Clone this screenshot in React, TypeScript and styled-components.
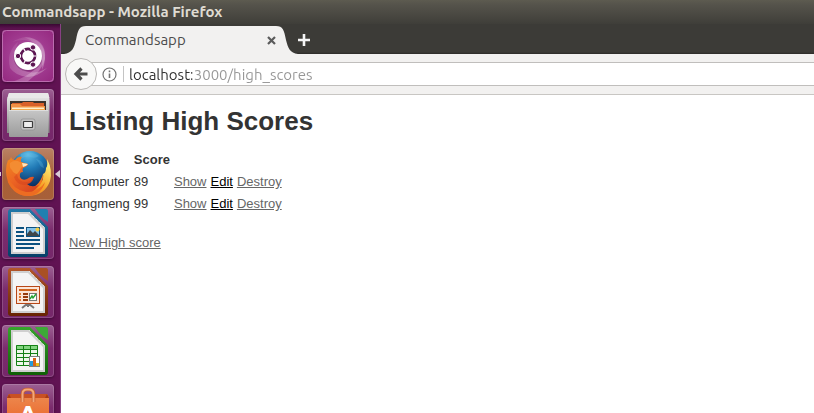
import React from "react";
import styled, { createGlobalStyle } from "styled-components";

const GlobalStyle = createGlobalStyle`
  * { box-sizing: border-box; }
  body { margin: 0; background: #fff; }
`;

const uiFont = `Ubuntu, "Noto Sans", sans-serif`;

const Desktop = styled.div`
  display: flex;
  flex-direction: column;
  height: 100vh;
  overflow: hidden;
  font-family: ${uiFont};
`;

const TitleBar = styled.header`
  flex: none;
  height: 24px;
  padding: 0 2px;
  background: linear-gradient(#5d5b50, #55534b 20%, #3f3e39);
  color: #dfdbd2;
  font-size: 15px;
  font-weight: 700;
  line-height: 24px;
  white-space: nowrap;
`;

const Workspace = styled.div`
  display: flex;
  flex: 1;
  min-height: 0;
`;

const Launcher = styled.nav`
  flex: none;
  display: flex;
  flex-direction: column;
  gap: 7px;
  width: 61px;
  padding: 6px 0 0 2px;
  overflow: hidden;
  border-right: 1px solid #874083;
  background: linear-gradient(#3a0833, #611353 5px, #611353);
`;

const Tile = styled.button<{ $tint?: string }>`
  position: relative;
  flex: none;
  width: 52px;
  height: 52px;
  padding: 0;
  border: 0;
  border-radius: 4px;
  background: ${(p) => p.$tint ?? "linear-gradient(#9c6093, #7b2c6d 45%, #75276a)"};
  box-shadow: inset 0 0 0 1px rgba(255, 255, 255, 0.16), 0 1px 3px rgba(30, 0, 25, 0.5);

  svg { display: block; }
`;

const FocusArrow = styled.span`
  position: absolute;
  top: 22px;
  left: 53px;
  border: 4px solid transparent;
  border-left-width: 0;
  border-right: 5px solid #d9cbd7;
`;

const RunningMark = styled.span`
  position: absolute;
  top: 24px;
  left: -2px;
  width: 1px;
  height: 4px;
  background: #d9cbd7;
`;

const Browser = styled.div`
  flex: 1;
  min-width: 0;
  display: flex;
  flex-direction: column;
  background: #fff;
`;

const TabStrip = styled.div`
  flex: none;
  display: flex;
  align-items: flex-end;
  height: 30px;
  background: linear-gradient(#3c3b37 28px, #2c2b28);
`;

const TabShape = styled.div`
  display: flex;
  height: 28px;
  margin-left: 3px;

  > svg { display: block; flex: none; }
`;

const TabBody = styled.div`
  display: flex;
  align-items: center;
  justify-content: space-between;
  width: 190px;
  background: #f2f1f0;
`;

const TabLabel = styled.span`
  margin-left: -1px;
  color: #4c4c4c;
  font-size: 15px;
  line-height: 20px;
`;

const IconButton = styled.button`
  display: flex;
  align-items: center;
  justify-content: center;
  padding: 0;
  border: 0;
  background: none;
`;

const NewTabButton = styled(IconButton)`
  width: 14px;
  height: 28px;
  margin-left: -1px;
`;

const NavBar = styled.div`
  flex: none;
  display: flex;
  align-items: center;
  height: 41px;
  padding-left: 4px;
  background: #f2f1f0;
  border-bottom: 1px solid #c8c6c3;
`;

const BackButton = styled(IconButton)`
  position: relative;
  flex: none;
  width: 32px;
  height: 32px;
  border: 1px solid #bab8b6;
  border-radius: 50%;
  background: #f8f8f7;
`;

const AddressBar = styled.div`
  flex: 1;
  display: flex;
  align-items: center;
  height: 24px;
  margin-left: -6px;
  padding-left: 11px;
  border: 1px solid #c0bebc;
  border-width: 1px 0;
  background: #fff;
`;

const Divider = styled.span`
  width: 1px;
  height: 16px;
  margin: 0 5px 0 6px;
  background: #c4c4c4;
`;

const AddressInput = styled.input`
  flex: 1;
  min-width: 0;
  height: 22px;
  padding: 1px 0 0;
  border: 0;
  outline: 0;
  font-family: ${uiFont};
  font-size: 15px;
  color: transparent;
  background: linear-gradient(90deg, #2e2e2e 63px, #969696 63px);
  background-clip: text;
  -webkit-background-clip: text;
`;

const Page = styled.main`
  margin: 0 8px;
  color: #333;
  font-family: Arial, "Liberation Sans", sans-serif;
  font-size: 13px;
  line-height: 18px;
`;

const Heading = styled.h1`
  margin: 17px 0 18px;
  font-size: 26px;
  line-height: 18px;
`;

const ScoreTable = styled.table`
  margin-bottom: 18px;
  border-spacing: 2px;

  th, td { padding: 1px; }
`;

const PageLink = styled.a<{ $active?: boolean }>`
  color: ${(p) => (p.$active ? "#000" : "#666")};
`;

const UbuntuIcon = () => (
  <svg width="52" height="52" viewBox="0 0 52 52">
    <defs>
      <radialGradient id="dash" cx="50%" cy="50%" r="70%">
        <stop offset="0" stopColor="#b05aa5" />
        <stop offset=".55" stopColor="#a03a8f" />
        <stop offset="1" stopColor="#94287f" />
      </radialGradient>
      <linearGradient id="swirl" x1="0" y1="0" x2="1" y2="1">
        <stop offset="0" stopColor="#fff" stopOpacity=".06" />
        <stop offset="1" stopColor="#fff" stopOpacity=".3" />
      </linearGradient>
    </defs>
    <rect width="52" height="52" rx="4" fill="url(#dash)" />
    <path d="M10 12Q26 2 38 13Q47 24 40 40Q42 22 33 14Q24 7 10 12Z" fill="url(#swirl)" />
    <path d="M8 38Q4 22 16 12Q10 26 19 38Q30 47 45 38Q30 52 15 44Q10 41 8 38Z" fill="url(#swirl)" />
    <path d="M22 7Q45 8 43 29Q40 41 25 52H10Q40 42 38 23Q35 12 22 7Z" fill="url(#swirl)" />
    <rect x=".5" y=".5" width="51" height="51" rx="4" fill="none" stroke="#c988c0" strokeOpacity=".7" />
    <circle cx="26" cy="27" r="14.4" fill="#5c1752" opacity=".35" />
    <circle cx="26" cy="26" r="14" fill="#fff" />
    <circle cx="26" cy="26" r="7" fill="none" stroke="#5d1753" strokeWidth="2.8" />
    <g stroke="#fff" strokeWidth="1.2">
      <path d="M26 26L34.5 26M26 26L21.7 18.6M26 26L21.7 33.4" />
    </g>
    <circle cx="26" cy="26" r="5.5" fill="#fff" />
    <g fill="#5d1753" stroke="#fff" strokeWidth="1">
      <circle cx="16" cy="26" r="2.7" />
      <circle cx="31" cy="17.4" r="2.7" />
      <circle cx="31" cy="34.6" r="2.7" />
    </g>
  </svg>
);

const FilesIcon = () => (
  <svg width="52" height="52" viewBox="0 0 52 52">
    <defs>
      <linearGradient id="drawer" x1="0" y1="0" x2="0" y2="1">
        <stop offset="0" stopColor="#c6c6c6" />
        <stop offset="1" stopColor="#9b9b9b" />
      </linearGradient>
      <linearGradient id="cabinet" x1="0" y1="0" x2="0" y2="1">
        <stop offset="0" stopColor="#ededed" />
        <stop offset=".25" stopColor="#d6d6d6" />
        <stop offset="1" stopColor="#868686" />
      </linearGradient>
    </defs>
    <path d="M7 4H46L47.5 10V44H5V10Z" fill="url(#cabinet)" />
    <path d="M7 4H46L47.5 9H5.5Z" fill="#e9e9e9" />
    <rect x="8" y="12" width="36" height="10" fill="#3d332d" />
    <path d="M10 14H20L21 13H31L32 14H42V22H10Z" fill="#d9602a" />
    <path d="M9 15H18L20 17H43V22H9Z" fill="#f09045" />
    <path d="M10 18.5H42V20H10Z" fill="#fff0cb" />
    <path d="M9 20H43V22H9Z" fill="#f5a94c" />
    <rect x="7" y="21" width="39" height="27" rx="1" fill="url(#drawer)" />
    <path d="M7 21.5H46" stroke="#dedede" />
    <rect x="19" y="30" width="14" height="11" rx="2" fill="#c2c2c2" stroke="#8c8c8c" strokeWidth=".7" />
    <rect x="21.5" y="32.5" width="9" height="6" rx=".5" fill="#ededed" stroke="#3b3b3b" strokeWidth="1.2" />
  </svg>
);

const FirefoxIcon = () => (
  <svg width="52" height="52" viewBox="0 0 52 52">
    <defs>
      <radialGradient id="globe" cx="45%" cy="10%" r="85%">
        <stop offset="0" stopColor="#5cbbe6" />
        <stop offset=".45" stopColor="#1f78b4" />
        <stop offset="1" stopColor="#0b2a5c" />
      </radialGradient>
      <linearGradient id="fox" x1="0" y1="0" x2=".8" y2="1">
        <stop offset="0" stopColor="#f28a20" />
        <stop offset=".5" stopColor="#ec6524" />
        <stop offset="1" stopColor="#d7431f" />
      </linearGradient>
      <linearGradient id="tail" x1="0" y1="1" x2=".8" y2="0">
        <stop offset="0" stopColor="#e65b1e" />
        <stop offset=".55" stopColor="#f7a528" />
        <stop offset="1" stopColor="#fff07a" />
      </linearGradient>
    </defs>
    <circle cx="28" cy="22" r="19" fill="url(#globe)" />
    <path d="M19 6Q29 2 37 8Q33 11 28 9Q23 8 19 11ZM34 11Q41 12 42 20Q38 19 37 15Z" fill="#6fc1e6" opacity=".28" />
    <path d="M45 11Q51 22 48 33Q43 47 27 48Q17 48 12 42L22 40Q34 42 39 34Q42 31 41 26Q44 25 44 20Q46 18 45 11Z" fill="url(#tail)" />
    <path d="M41 26Q42 35 34 41Q40 40 43 35Q38 46 26 46L23 42Q37 40 41 26Z" fill="#f0761f" />
    <path d="M6 12Q8 13 9 9Q10 12 13 12Q16 8 20 9Q18 11 19 14L26 16Q26 18 21 20Q20 22 21 24Q17 24 18 29Q20 33 25 31Q29 28 32 29Q30 35 25 36Q29 40 37 37Q31 46 22 46Q11 45 6 34Q2 22 6 12Z" fill="url(#fox)" />
    <path d="M8 15Q13 11 18 14L25 16Q22 18 19 20Q18 23 15 26Q11 25 10 22Q7 20 8 15Z" fill="#f38c32" />
    <path d="M20 15L26 16Q25 18 21 19Z" fill="#ffe7bd" />
    <path d="M15 26Q16 34 24 34Q29 34 32 29Q30 37 22 37Q14 36 12 29Z" fill="#cf3b1c" opacity=".4" />
    <path d="M6 28Q10 41 24 44Q37 45 43 34Q39 47 27 48Q12 48 6 34Z" fill="#ed6c22" />
  </svg>
);

const DocumentShape = ({ id, colors, fold }: { id: string; colors: [string, string]; fold: string }) => (
  <>
    <defs>
      <linearGradient id={id} x1="0" y1="0" x2="0" y2="1">
        <stop offset="0" stopColor={colors[0]} />
        <stop offset="1" stopColor={colors[1]} />
      </linearGradient>
    </defs>
    <path d="M9 2H28L46 20V47Q46 50 43 50H9Q6 50 6 47V5Q6 2 9 2Z" fill={`url(#${id})`} />
    <path d="M33 2H44Q46 2 46 4V15Q38 10 33 2Z" fill={fold} />
    <path d="M9 5H27L43 21V47H9Z" fill="#cfcfcf" />
    <path d="M11 7H26L41 22V45H11Z" fill="#f4f4f4" />
    <path d="M27 5L43 21" stroke="#fff" strokeWidth="1" strokeDasharray="1 1" />
  </>
);

const WriterIcon = () => (
  <svg width="52" height="52" viewBox="0 0 52 52">
    <DocumentShape id="writer" colors={["#2178a8", "#063f68"]} fold="#1f80b0" />
    <path d="M14 21H22M14 25H22M14 29H22M14 33H38M14 37H38M14 41H32" stroke="#0b5180" strokeWidth="2" />
    <rect x="24.5" y="20.5" width="13" height="9" fill="#83c3ea" stroke="#0b5180" />
    <circle cx="35.5" cy="22.5" r="2" fill="#f1cd45" />
    <path d="M25 29V27L28 23L31 26L33 24L37 28V29Z" fill="#404749" />
  </svg>
);

const ImpressIcon = () => (
  <svg width="52" height="52" viewBox="0 0 52 52">
    <DocumentShape id="impress" colors={["#b3562a", "#672303"]} fold="#a95024" />
    <path d="M25 38L20 42M27 38L32 42M26 38V41" stroke="#777" strokeWidth="2" />
    <rect x="14.5" y="20.5" width="23" height="17" fill="#fbe5d8" stroke="#b84717" />
    <path d="M17 24H35" stroke="#cf641e" strokeWidth="2" />
    <path d="M17 28H19M17 31H19M17 34H19" stroke="#dd7733" strokeWidth="2" />
    <path d="M21 28H26M21 31H26M21 34H26" stroke="#963b0e" strokeWidth="2" />
    <rect x="27.5" y="27.5" width="7" height="7" fill="#fff" stroke="#777" />
    <path d="M28 33L30 30L31 32L34 28" fill="none" stroke="#23a233" strokeWidth="1.4" />
  </svg>
);

const CalcIcon = () => (
  <svg width="52" height="52" viewBox="0 0 52 52">
    <DocumentShape id="calc" colors={["#36a52c", "#105f06"]} fold="#3da936" />
    <rect x="14" y="20" width="22" height="21" fill="#eef8eb" />
    <rect x="14" y="20" width="22" height="4" fill="#83d580" />
    <path d="M14.5 20.5H35.5V40.5H14.5ZM21.5 20V41M28.5 20V41M14 24.5H36M14 28.5H36M14 32.5H36M14 36.5H36" fill="none" stroke="#148016" />
    <rect x="27.5" y="31.5" width="10" height="10" fill="#fff" stroke="#808080" />
    <path d="M28 36H31V41H28Z" fill="#249cd9" />
    <path d="M31 33H34V41H31Z" fill="#d86618" />
    <path d="M34 38H37V41H34Z" fill="#e5bd18" />
  </svg>
);

const SoftwareIcon = () => (
  <svg width="52" height="52" viewBox="0 0 52 52">
    <defs>
      <linearGradient id="bag" x1="0" y1="0" x2="0" y2="1">
        <stop offset="0" stopColor="#ed8a50" />
        <stop offset="1" stopColor="#e95d20" />
      </linearGradient>
    </defs>
    <path d="M7 10H45L47 14V48H5V14Z" fill="url(#bag)" />
    <path d="M7 10H45L47 14H5Z" fill="#c95123" />
    <path d="M5 14L7 10L9 14ZM43 14L45 10L47 14Z" fill="#a83c16" />
    <path d="M20.5 18V10Q20.5 5.5 25 5.5H27Q31.5 5.5 31.5 10V18" fill="none" stroke="#c75b2c" strokeWidth="3.5" />
    <path d="M20.5 18V10Q20.5 5.5 25 5.5H27Q31.5 5.5 31.5 10V18" fill="none" stroke="#f3a878" strokeWidth="2" />
    <text x="26" y="41" textAnchor="middle" fontFamily="Lato, sans-serif" fontWeight="900" fontSize="27" fill="#fff">A</text>
  </svg>
);

const launcherItems = [
  { name: "Search your computer", Icon: UbuntuIcon },
  { name: "Files", Icon: FilesIcon },
  { name: "Firefox", Icon: FirefoxIcon, tint: "linear-gradient(#b98265, #a85f37 55%, #a76039)", running: true },
  { name: "LibreOffice Writer", Icon: WriterIcon },
  { name: "LibreOffice Impress", Icon: ImpressIcon },
  { name: "LibreOffice Calc", Icon: CalcIcon },
  { name: "Ubuntu Software", Icon: SoftwareIcon },
];

const scores = [
  { game: "Computer", score: 89 },
  { game: "fangmeng", score: 99 },
];

export default function App() {
  return (
    <Desktop>
      <GlobalStyle />
      <TitleBar>Commandsapp - Mozilla Firefox</TitleBar>
      <Workspace>
        <Launcher aria-label="Launcher">
          {launcherItems.map(({ name, Icon, tint, running }) => (
            <Tile key={name} aria-label={name} $tint={tint}>
              {running && <RunningMark />}
              <Icon />
              {running && <FocusArrow />}
            </Tile>
          ))}
        </Launcher>
        <Browser>
          <TabStrip>
            <TabShape>
              <svg width="22" height="28" viewBox="0 0 22 28">
                <path d="M0 28C8 27 10 22 12 14C14 4 15 0 22 0V28Z" fill="#f2f1f0" />
              </svg>
              <TabBody>
                <TabLabel>Commandsapp</TabLabel>
                <IconButton aria-label="Close tab">
                  <svg width="9" height="9" viewBox="0 0 9 9">
                    <path d="M1 1L8 8M8 1L1 8" stroke="#5b5b5b" strokeWidth="2.2" />
                  </svg>
                </IconButton>
              </TabBody>
              <svg width="22" height="28" viewBox="0 0 22 28">
                <path d="M22 28C14 27 12 22 10 14C8 4 7 0 0 0V28Z" fill="#f2f1f0" />
              </svg>
            </TabShape>
            <NewTabButton aria-label="New tab">
              <svg width="14" height="14" viewBox="0 0 14 14">
                <path d="M7 1V13M1 7H13" stroke="#f5f5f5" strokeWidth="2.6" />
              </svg>
            </NewTabButton>
          </TabStrip>
          <NavBar>
            <BackButton aria-label="Back">
              <svg width="16" height="16" viewBox="0 0 16 16">
                <path d="M8.5 2.5L3 8L8.5 13.5M3.5 8H14.5" fill="none" stroke="#4c4c4c" strokeWidth="3.2" />
              </svg>
            </BackButton>
            <AddressBar>
              <IconButton aria-label="Site information">
                <svg width="15" height="15" viewBox="0 0 15 15">
                  <circle cx="7.5" cy="7.5" r="6.5" fill="none" stroke="#747474" strokeWidth="1.2" />
                  <path d="M7.5 6.5V11M7.5 3.5V5.2" stroke="#747474" strokeWidth="1.6" />
                </svg>
              </IconButton>
              <Divider />
              <AddressInput aria-label="Address" defaultValue="localhost:3000/high_scores" spellCheck={false} />
            </AddressBar>
          </NavBar>
          <Page>
            <Heading>Listing High Scores</Heading>
            <ScoreTable>
              <thead>
                <tr>
                  <th>Game</th>
                  <th>Score</th>
                  <th colSpan={3} />
                </tr>
              </thead>
              <tbody>
                {scores.map(({ game, score }) => (
                  <tr key={game}>
                    <td>{game}</td>
                    <td>{score}</td>
                    <td><PageLink href="#show">Show</PageLink></td>
                    <td><PageLink href="#edit" $active>Edit</PageLink></td>
                    <td><PageLink href="#destroy">Destroy</PageLink></td>
                  </tr>
                ))}
              </tbody>
            </ScoreTable>
            <PageLink href="#new">New High score</PageLink>
          </Page>
        </Browser>
      </Workspace>
    </Desktop>
  );
}
